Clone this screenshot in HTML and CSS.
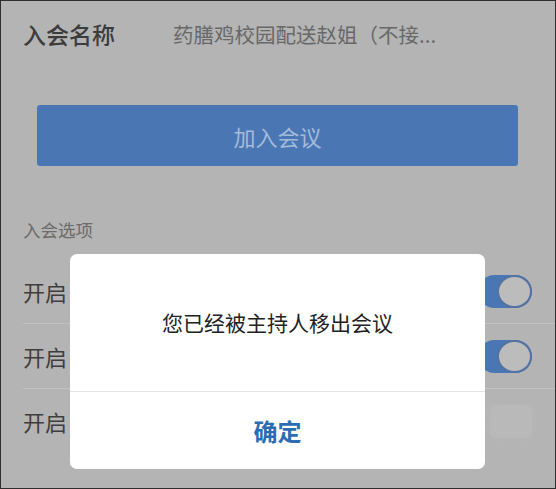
FILE: index.html
```html
<!DOCTYPE html>
<html lang="zh-CN">
<head>
  <meta charset="UTF-8">
  <meta name="viewport" content="width=device-width, initial-scale=1.0">
  <title>入会</title>
  <link rel="stylesheet" href="styles.css">
</head>
<body>

  <div class="screen">
    <div class="name-row">
      <span class="name-label">入会名称</span>
      <span class="name-value">药膳鸡校园配送赵姐（不接...</span>
    </div>

    <button class="join-btn">加入会议</button>

    <div class="section-label">入会选项</div>

    <div class="options">
      <div class="option">
        <span class="option-label">开启</span>
        <span class="switch on"><span class="knob"></span></span>
      </div>
      <div class="option">
        <span class="option-label">开启</span>
        <span class="switch on"><span class="knob"></span></span>
      </div>
      <div class="option">
        <span class="option-label">开启</span>
        <span class="switch off"></span>
      </div>
    </div>

    <!-- removed-from-meeting alert -->
    <div class="dialog">
      <div class="dialog-msg">您已经被主持人移出会议</div>
      <div class="dialog-btn">确定</div>
    </div>
  </div>

</body>
</html>
```

FILE: styles.css
```css
body {
  margin: 0;
  padding: 0;
  font-family: 'Noto Sans CJK SC', 'Noto Sans', sans-serif;
}

.screen {
  position: relative;
  box-sizing: border-box;
  width: 556px;
  height: 489px;
  overflow: hidden;
  background-color: #b4b4b4;
  border: 1px solid #2e2e2e;
}

.name-row {
  display: flex;
  align-items: center;
  height: 66px;
  padding-left: 22px;
}

.name-label {
  width: 150px;
  font-size: 23px;
  font-weight: 500;
  color: #3c3c3c;
}

.name-value {
  font-size: 20.5px;
  color: #686868;
  white-space: nowrap;
}

.join-btn {
  display: block;
  width: 481px;
  height: 61px;
  margin: 38px 0 0 36px;
  padding: 0;
  border: none;
  border-radius: 3px;
  background-color: #4a77b4;
  color: #a4bbdb;
  font-family: inherit;
  font-size: 22px;
}

.section-label {
  margin: 52px 0 0 22px;
  font-size: 17.5px;
  line-height: 24px;
  color: #6b6b6b;
}

.options {
  margin-top: 17px;
  margin-left: 22px;
}

.option {
  display: flex;
  align-items: center;
  justify-content: space-between;
  height: 64px;
  padding-right: 23px;
  border-bottom: 1px solid #c2c2c2;
}

.option:last-child {
  border-bottom: none;
}

.option-label {
  font-size: 22px;
  color: #3e3e3e;
}

.switch {
  position: relative;
  width: 54px;
  height: 33px;
  border-radius: 17px;
}

.switch.on {
  background-color: #4a77b4;
}

.switch.off {
  width: 42px;
  border-radius: 6px;
  background-color: #b9b9b9;
  box-shadow: 0 0 6px #b9b9b9;
}

.knob {
  position: absolute;
  right: 0;
  top: 0;
  box-sizing: border-box;
  width: 35px;
  height: 33px;
  border-radius: 50%;
  background-color: #bcbcbc;
  border: 2px solid #55739f;
}

.dialog {
  position: absolute;
  left: 69px;
  top: 253px;
  width: 415px;
  height: 215px;
  display: flex;
  flex-direction: column;
  background-color: #fff;
  border-radius: 7px;
  overflow: hidden;
}

.dialog-msg {
  display: flex;
  align-items: center;
  justify-content: center;
  height: 138px;
  padding-bottom: 2px;
  box-sizing: border-box;
  font-size: 21px;
  color: #222;
  border-bottom: 1px solid #e4e4e4;
}

.dialog-btn {
  flex: 1;
  display: flex;
  align-items: center;
  justify-content: center;
  font-size: 24px;
  font-weight: 700;
  color: #2b6db3;
}
```
